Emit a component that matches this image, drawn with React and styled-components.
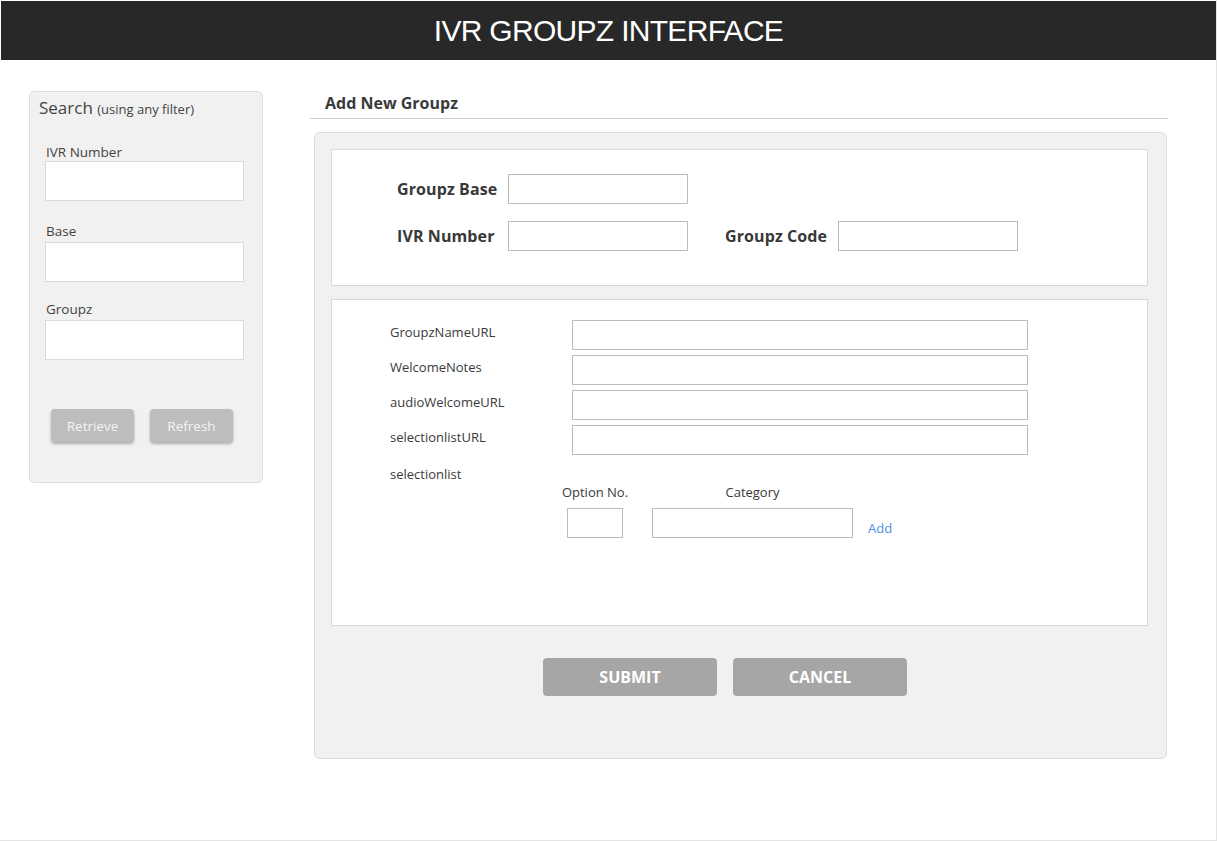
import React from "react";
import styled, { createGlobalStyle } from "styled-components";

const GlobalStyle = createGlobalStyle`
  body {
    margin: 0;
    background: #fff;
    font-family: "Open Sans", "Noto Sans", sans-serif;
    color: #333;
  }
  * { box-sizing: border-box; }
`;

const Page = styled.div`
  width: 1217px;
  height: 841px;
  padding: 1px 0 0 1px;
  border-right: 1px solid #e4e4e4;
  border-bottom: 1px solid #e4e4e4;
`;

const Header = styled.header`
  height: 59px;
  background: #282828;
  display: flex;
  align-items: center;
  justify-content: center;
  h1 {
    margin: 0;
    font-family: "Liberation Sans", Arial, sans-serif;
    font-weight: normal;
    font-size: 30px;
    letter-spacing: -0.7px;
    color: #fff;
  }
`;

const Body = styled.div`
  display: flex;
  align-items: flex-start;
  padding: 31px 0 0 28px;
`;

const Sidebar = styled.aside`
  width: 234px;
  height: 392px;
  background: #f1f1f1;
  border: 1px solid #dcdcdc;
  border-radius: 5px;
  padding: 5px 0 0 9px;
`;

const SearchTitle = styled.div`
  font-size: 17px;
  line-height: 22px;
  color: #444;
  margin-bottom: 24px;
  span {
    font-size: 13px;
  }
`;

const SideField = styled.div`
  margin-left: 6px;
  margin-bottom: ${(p) => p.$gap}px;
  label {
    display: block;
    font-size: 13.5px;
    line-height: 16px;
    color: #444;
    margin: 0 0 ${(p) => p.$labelGap ?? 3}px 1px;
  }
`;

const SideInput = styled.input`
  display: block;
  width: 199px;
  height: 40px;
  border: 1px solid #dadada;
  background: #fff;
  outline: none;
`;

const SideButtons = styled.div`
  display: flex;
  gap: 16px;
  margin: 49px 0 0 12px;
`;

const SideButton = styled.button`
  width: 83px;
  height: 33px;
  border: none;
  border-radius: 4px;
  background: #bdbdbd;
  color: #f4f4f4;
  font-family: inherit;
  font-size: 13.5px;
  box-shadow: 0 2px 3px rgba(0, 0, 0, 0.28);
  padding: 0;
`;

const Main = styled.main`
  width: 858px;
  margin-left: 47px;
  padding-top: 1px;
`;

const MainTitle = styled.h2`
  margin: 0;
  font-size: 16px;
  line-height: 20px;
  font-weight: bold;
  color: #3a3a3a;
  padding: 1px 0 5px 15px;
  border-bottom: 1px solid #cfcfcf;
`;

const Panel = styled.section`
  width: 853px;
  height: 627px;
  margin: 13px 0 0 4px;
  background: #f1f1f1;
  border: 1px solid #dcdcdc;
  border-radius: 6px;
  padding: 16px 0 0 16px;
`;

const Box = styled.div`
  width: 817px;
  height: ${(p) => p.$h}px;
  background: #fff;
  border: 1px solid #d8d8d8;
  margin-bottom: 13px;
`;

const TopGrid = styled.div`
  display: grid;
  grid-template-columns: 111px 180px 37px 113px 180px;
  row-gap: 17px;
  align-items: center;
  padding: 24px 0 0 65px;
`;

const BoldLabel = styled.label`
  font-size: 16px;
  font-weight: bold;
  letter-spacing: 0.1px;
  color: #383838;
  white-space: nowrap;
  grid-column: ${(p) => p.$col || "auto"};
`;

const Field = styled.input`
  display: block;
  width: ${(p) => p.$w}px;
  height: 30px;
  border: 1px solid #bcbcbc;
  background: #fff;
  outline: none;
  grid-column: ${(p) => p.$col || "auto"};
`;

const UrlGrid = styled.div`
  display: grid;
  grid-template-columns: 182px 456px;
  row-gap: 5px;
  align-items: start;
  padding: 20px 0 0 58px;
`;

const SmallLabel = styled.label`
  font-size: 13px;
  line-height: 18px;
  color: #3a3a3a;
  padding-top: ${(p) => p.$top || 3}px;
`;

const Options = styled.div`
  display: grid;
  grid-template-columns: 56px 201px auto;
  column-gap: 29px;
  row-gap: 7px;
  margin: 0 0 0 235px;
  align-items: end;
  span {
    font-size: 13px;
    line-height: 18px;
    color: #3a3a3a;
    text-align: center;
    white-space: nowrap;
  }
`;

const OptionHead = styled.span`
  display: flex;
  justify-content: center;
`;

const AddLink = styled.a`
  font-size: 13px;
  line-height: 18px;
  color: #4a90e2;
  margin-left: -14px;
  padding-bottom: 1px;
  cursor: pointer;
`;

const Actions = styled.div`
  display: flex;
  gap: 16px;
  padding: 19px 0 0 212px;
`;

const ActionButton = styled.button`
  width: 174px;
  height: 38px;
  border: none;
  border-radius: 4px;
  background: #a6a6a6;
  color: #fff;
  font-family: inherit;
  font-size: 16px;
  font-weight: bold;
  padding: 0;
`;

const urlRows = ["GroupzNameURL", "WelcomeNotes", "audioWelcomeURL", "selectionlistURL"];

export default function App() {
  return (
    <Page>
      <GlobalStyle />
      <Header>
        <h1>IVR GROUPZ INTERFACE</h1>
      </Header>
      <Body>
        <Sidebar>
          <SearchTitle>
            Search <span>(using any filter)</span>
          </SearchTitle>
          <SideField $labelGap={1} $gap={22}>
            <label>IVR Number</label>
            <SideInput />
          </SideField>
          <SideField $gap={19}>
            <label>Base</label>
            <SideInput />
          </SideField>
          <SideField $gap={0}>
            <label>Groupz</label>
            <SideInput />
          </SideField>
          <SideButtons>
            <SideButton>Retrieve</SideButton>
            <SideButton>Refresh</SideButton>
          </SideButtons>
        </Sidebar>
        <Main>
          <MainTitle>Add New Groupz</MainTitle>
          <Panel>
            <Box $h={137}>
              <TopGrid>
                <BoldLabel>Groupz Base</BoldLabel>
                <Field $w={180} $col="2 / 3" />
                <BoldLabel $col="1 / 2">IVR Number</BoldLabel>
                <Field $w={180} />
                <BoldLabel $col="4 / 5">Groupz Code</BoldLabel>
                <Field $w={180} />
              </TopGrid>
            </Box>
            <Box $h={327}>
              <UrlGrid>
                {urlRows.map((r) => (
                  <React.Fragment key={r}>
                    <SmallLabel>{r}</SmallLabel>
                    <Field $w={456} />
                  </React.Fragment>
                ))}
                <SmallLabel $top={5}>selectionlist</SmallLabel>
              </UrlGrid>
              <Options>
                <OptionHead>
                  <span>Option No.</span>
                </OptionHead>
                <span>Category</span>
                <span />
                <Field $w={56} />
                <Field $w={201} />
                <AddLink>Add</AddLink>
              </Options>
            </Box>
            <Actions>
              <ActionButton>SUBMIT</ActionButton>
              <ActionButton>CANCEL</ActionButton>
            </Actions>
          </Panel>
        </Main>
      </Body>
    </Page>
  );
}
